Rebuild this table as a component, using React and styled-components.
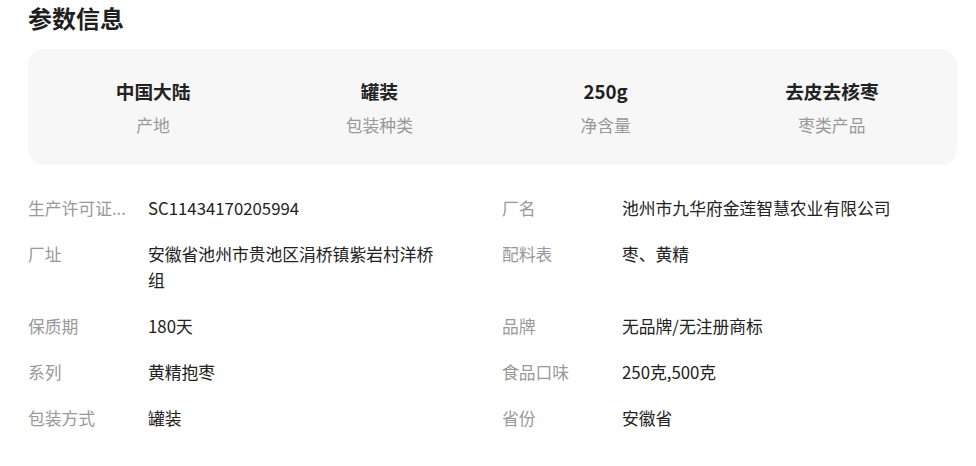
import React from "react";
import styled, { createGlobalStyle } from "styled-components";

const Global = createGlobalStyle`
  html, body { margin: 0; padding: 0; background: #fff; }
  body { font-family: "Noto Sans CJK SC", "Noto Sans", sans-serif; }
`;

const Page = styled.div`
  padding: 2px 19px 0 28px;
`;

const Title = styled.h2`
  margin: 0;
  font-size: 24px;
  line-height: 32px;
  font-weight: 700;
  color: #1f1f1f;
`;

const Card = styled.div`
  margin-top: 15px;
  background: #f7f7f7;
  border-radius: 16px;
  padding: 29px 12px 29px;
  display: grid;
  grid-template-columns: repeat(4, 1fr);
`;

const Stat = styled.div`
  display: flex;
  flex-direction: column;
  align-items: center;
`;

const StatValue = styled.div`
  font-size: 18.7px;
  line-height: 26px;
  font-weight: 700;
  color: #222;
`;

const StatLabel = styled.div`
  margin-top: 10px;
  font-size: 16.8px;
  line-height: 22px;
  color: #999;
`;

const Grid = styled.div`
  margin-top: 30px;
  display: grid;
  grid-template-columns: 474px 1fr;
  row-gap: 20px;
`;

const Item = styled.div`
  display: flex;
  align-items: flex-start;
  font-size: 16.8px;
  line-height: 26px;
`;

const Label = styled.div`
  flex: 0 0 100px;
  margin-right: 20px;
  color: #999;
  white-space: nowrap;
`;

const Value = styled.div`
  width: 296px;
  color: #222;
`;

const stats = [
  ["中国大陆", "产地"],
  ["罐装", "包装种类"],
  ["250g", "净含量"],
  ["去皮去核枣", "枣类产品"],
];

const rows = [
  ["生产许可证...", "SC11434170205994", "生产许可证编号"],
  ["厂名", "池州市九华府金莲智慧农业有限公司"],
  ["厂址", "安徽省池州市贵池区涓桥镇紫岩村洋桥组"],
  ["配料表", "枣、黄精"],
  ["保质期", "180天"],
  ["品牌", "无品牌/无注册商标"],
  ["系列", "黄精抱枣"],
  ["食品口味", "250克,500克"],
  ["包装方式", "罐装"],
  ["省份", "安徽省"],
];

export default function App() {
  return (
    <Page>
      <Global />
      <Title>参数信息</Title>
      <Card>
        {stats.map(([v, l]) => (
          <Stat key={l}>
            <StatValue>{v}</StatValue>
            <StatLabel>{l}</StatLabel>
          </Stat>
        ))}
      </Card>
      <Grid>
        {rows.map(([l, v, full]) => (
          <Item key={l}>
            <Label title={full || l}>{l}</Label>
            <Value>{v}</Value>
          </Item>
        ))}
      </Grid>
    </Page>
  );
}
